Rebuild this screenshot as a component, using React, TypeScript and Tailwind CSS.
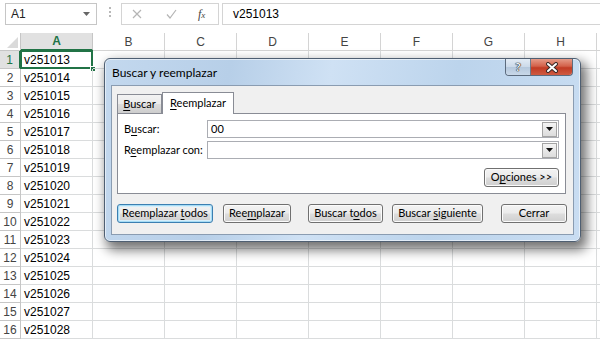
import React from "react"

const cols = ["A", "B", "C", "D", "E", "F", "G", "H", ""]
const rows = Array.from({ length: 16 }, (_, i) => i + 1)

const btnBase =
  "h-[19px] flex items-center justify-center rounded-[3px] border text-[11px] text-black whitespace-nowrap bg-[linear-gradient(to_bottom,#f3f3f3_0%,#ebebeb_48%,#dddddd_52%,#cfcfcf_100%)]"
const btnNormal = "border-[#707070] shadow-[inset_0_0_0_1px_#fbfbfb]"
const btnDefault = "border-[#3c7fb1] shadow-[inset_0_0_0_1px_#a6dcf5,inset_0_0_0_2px_#d6eefa]"

function U({ children }: { children: React.ReactNode }) {
  return <span className="underline underline-offset-[2px] decoration-[1px]">{children}</span>
}

function DropArrow() {
  return (
    <div className="w-[15px] h-[15px] mr-px flex items-center justify-center border border-[#a4a4a4] bg-[linear-gradient(to_bottom,#f4f4f4,#dcdcdc)]">
      <svg width="7" height="4" viewBox="0 0 7 4">
        <path d="M0 0h7L3.5 4z" fill="#111" />
      </svg>
    </div>
  )
}

function Dialog() {
  return (
    <div className="absolute left-[104px] top-[58px] w-[477px] h-[184px] rounded-[6px] border border-[#4f5f72] bg-[linear-gradient(100deg,#c3d8ee_0%,#b7cfe8_25%,#cfe1f4_45%,#bcd4ec_70%,#c9ddf2_100%)] shadow-[4px_6px_12px_2px_rgba(0,0,0,0.55),inset_0_0_0_1px_rgba(255,255,255,0.55)] flex flex-col font-['Lato',sans-serif]">
      <div className="h-[26px] flex items-start justify-between pr-[7px]">
        <span className="mt-[5px] ml-[7px] text-[12px] text-black">Buscar y reemplazar</span>
        <div className="w-[68px] h-[17px] grid grid-cols-[25px_41px] rounded-b-[4px] border border-t-0 border-[#5c6b7d] overflow-hidden">
          <div className="flex items-center justify-center border-r border-[#6c7b8c] bg-[linear-gradient(to_bottom,#e2ebf5_0%,#cbd9e9_50%,#b5c8dd_52%,#c9d8e8_100%)]">
            <span className="text-[12px] font-bold leading-none text-[#eef2f6] [text-shadow:0_0_1px_#222,0_0_1px_#222,0_0_1px_#222]">?</span>
          </div>
          <div className="flex items-center justify-center bg-[linear-gradient(to_bottom,#e59b88_0%,#d3614a_45%,#c13b24_55%,#cf5b42_100%)]">
            <svg width="14" height="11" viewBox="0 0 14 11">
              <path d="M3 2l8 7M11 2l-8 7" stroke="#3b2a28" strokeWidth="4" strokeLinecap="round" />
              <path d="M3 2l8 7M11 2l-8 7" stroke="#ffffff" strokeWidth="2" strokeLinecap="round" />
            </svg>
          </div>
        </div>
      </div>
      <div className="mx-[6px] h-[150px] border border-[#8a9cb1] bg-[#f0f0f0] flex flex-col">
        <div className="mt-[6px] ml-[5px] h-[21px] flex items-end text-[11px] text-black">
          <div className="w-[45px] h-[19px] flex items-center justify-center border border-b-0 border-[#898c95] bg-[linear-gradient(to_bottom,#f3f3f3_0%,#ebebeb_50%,#dddddd_52%,#cdcdcd_100%)]">
            <span><U>B</U>uscar</span>
          </div>
          <div className="relative z-10 -mb-px w-[72px] h-[22px] flex items-center justify-center border border-b-0 border-[#898c95] bg-white">
            <span><U>R</U>eemplazar</span>
          </div>
        </div>
        <div className="ml-[5px] w-[449px] h-[81px] border border-[#898c95] bg-white flex flex-col text-[11px] text-black">
          <div className="mt-[6px] flex items-center">
            <span className="w-[89px] shrink-0 pl-[6px] whitespace-nowrap">B<U>u</U>scar:</span>
            <div className="w-[352px] h-[18px] flex items-center border border-[#abadb3]">
              <span className="flex-1 pl-[3px] text-[11px]">00</span>
              <DropArrow />
            </div>
          </div>
          <div className="mt-[3px] flex items-center">
            <span className="w-[89px] shrink-0 pl-[6px] whitespace-nowrap">R<U>e</U>emplazar con:</span>
            <div className="w-[352px] h-[18px] flex items-center border border-[#abadb3]">
              <span className="flex-1" />
              <DropArrow />
            </div>
          </div>
          <div className={`${btnBase} ${btnNormal} mt-[9px] self-end mr-[6px] w-[75px]`}>
            <span>O<U>p</U>ciones &gt;&gt;</span>
          </div>
        </div>
        <div className="mt-[10px] flex">
          <div className={`${btnBase} ${btnDefault} ml-[5px] w-[96px]`}>
            <span>Reemplazar <U>t</U>odos</span>
          </div>
          <div className={`${btnBase} ${btnNormal} ml-[10px] w-[68px]`}>
            <span>Ree<U>m</U>plazar</span>
          </div>
          <div className={`${btnBase} ${btnNormal} ml-[17px] w-[75px]`}>
            <span>Buscar t<U>o</U>dos</span>
          </div>
          <div className={`${btnBase} ${btnNormal} ml-[9px] w-[91px]`}>
            <span>Buscar <U>s</U>iguiente</span>
          </div>
          <div className={`${btnBase} ${btnNormal} ml-[18px] w-[66px]`}>
            <span>Cerrar</span>
          </div>
        </div>
      </div>
    </div>
  )
}

export default function App() {
  return (
    <div className="relative w-[600px] h-[340px] overflow-hidden bg-white font-['Liberation_Sans',Arial,sans-serif] text-[12px] text-black">
      {/* formula bar */}
      <div className="h-[33px] pt-[3px] flex items-start">
        <div className="ml-[5px] w-[92px] h-[22px] border border-[#c6c6c6] flex items-center justify-between pl-[5px] pr-[6px]">
          <span className="text-[12px] text-[#222]">A1</span>
          <svg width="7" height="4" viewBox="0 0 7 4">
            <path d="M0 0h7L3.5 4z" fill="#666" />
          </svg>
        </div>
        <div className="ml-[12px] mt-[4px] flex flex-col gap-[2px]">
          <div className="w-[2px] h-[2px] bg-[#b8b8b8]" />
          <div className="w-[2px] h-[2px] bg-[#b8b8b8]" />
          <div className="w-[2px] h-[2px] bg-[#b8b8b8]" />
        </div>
        <div className="ml-[10px] w-[98px] h-[22px] border border-[#d4d4d4] flex items-center">
          <svg className="ml-[10px]" width="10" height="10" viewBox="0 0 10 10">
            <path d="M1 1l8 8M9 1l-8 8" stroke="#b5b5b5" strokeWidth="1.2" />
          </svg>
          <svg className="ml-[24px]" width="11" height="10" viewBox="0 0 11 10">
            <path d="M1 5.5l3 3.5 6-8" stroke="#b5b5b5" strokeWidth="1.2" fill="none" />
          </svg>
          <span className="ml-[21px] font-['Liberation_Serif',serif] italic text-[12px] text-[#444]">
            f<span className="text-[9px]">x</span>
          </span>
        </div>
        <div className="ml-[3px] flex-1 h-[22px] border border-r-0 border-[#d4d4d4] flex items-center pl-[10px]">
          <span className="text-[12px]">v251013</span>
        </div>
      </div>

      {/* sheet */}
      <div className="grid grid-cols-[21px_repeat(9,72px)]">
        <div className="h-[18px] border-r border-b border-[#c6c6c6] relative bg-white">
          <svg className="absolute right-[2px] bottom-[2px]" width="11" height="11" viewBox="0 0 11 11">
            <path d="M11 0v11H0z" fill="#dadada" />
          </svg>
        </div>
        {cols.map((c, i) =>
          i === 0 ? (
            <div
              key={c}
              className="h-[18px] flex items-center justify-center bg-[#e1e1e1] border-r border-[#c6c6c6] border-b-2 border-b-[#217346] text-[#217346] font-bold"
            >
              {c}
            </div>
          ) : (
            <div key={i} className="h-[18px] flex items-center justify-center border-r border-b border-[#d4d4d4] text-[#444]">
              {c}
            </div>
          )
        )}
        {rows.map((r) => (
          <React.Fragment key={r}>
            <div
              className={
                r === 1
                  ? "h-[18px] flex items-center justify-center bg-[#e1e1e1] border-r-2 border-r-[#217346] border-b border-b-[#c6c6c6] text-[#217346]"
                  : "h-[18px] flex items-center justify-center border-r border-b border-[#c6c6c6] text-[#444]"
              }
            >
              {r}
            </div>
            {cols.map((_, i) => (
              <div key={i} className="relative h-[18px] border-r border-b border-[#dadcdd] flex items-center pl-[3px]">
                {i === 0 && <span>v{251012 + r}</span>}
                {i === 0 && r === 1 && (
                  <>
                    <div className="absolute -left-[1px] -top-[1px] -right-[1px] -bottom-[1px] border-2 border-[#217346]" />
                    <div className="absolute -right-[4px] -bottom-[4px] w-[6px] h-[6px] bg-[#217346] border border-white" />
                  </>
                )}
              </div>
            ))}
          </React.Fragment>
        ))}
      </div>

      <Dialog />
    </div>
  )
}
